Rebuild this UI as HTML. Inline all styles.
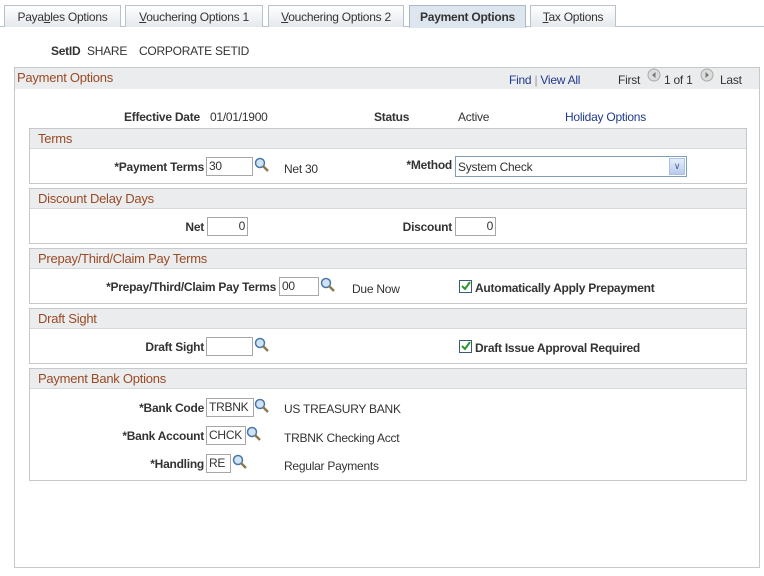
<!DOCTYPE html>
<html><head><meta charset="utf-8"><style>
*{margin:0;padding:0;box-sizing:border-box}
body{width:764px;height:576px;background:#fff;font-family:"Liberation Sans",Arial,sans-serif;font-size:12px;color:#333;position:relative;overflow:hidden;letter-spacing:-0.25px}
.a{position:absolute;white-space:nowrap}
.tab{position:absolute;top:5px;height:22px;border:1px solid #b7c2cc;border-bottom:none;background:linear-gradient(#fff,#e4e8ec);padding:4px 0 0;text-align:center;color:#333;font-size:12px}
.tab.on{background:#dde6ef;font-weight:bold;color:#333;height:22px;border-color:#a9b7c6}
.box{position:absolute;border:1px solid #c6c9cc}
.hd{position:absolute;left:0;right:0;top:0;height:20px;background:#eaecee;border-bottom:1px solid #d5d8db;color:#9a4a24;font-size:13px;padding:2px 0 0 8px}
.b{font-weight:bold}
.in{position:absolute;height:19px;border:1px solid #a7a7a7;background:#fff;padding:1px 2px;font-size:12px}
.lk{position:absolute;width:16px;height:16px}
.cb{position:absolute;width:13px;height:13px;border:1px solid #3a5a7a;background:#fff}
.blue{color:#223a8e}
</style></head><body>
<div class="a" style="left:0;top:26px;width:764px;border-top:1px solid #b7c2cc"></div>
<div class="tab" style="left:4px;width:117px">Paya<u>b</u>les Options</div>
<div class="tab" style="left:125px;width:138px"><u>V</u>ouchering Options 1</div>
<div class="tab" style="left:268px;width:136px"><u>V</u>ouchering Options 2</div>
<div class="tab on" style="left:409px;width:117px;height:23px;border-bottom:1px solid #dde6ef">Payment Options</div>
<div class="tab" style="left:530px;width:86px"><u>T</u>ax Options</div>

<div class="a b" style="left:51px;top:44px">SetID</div>
<div class="a" style="left:87px;top:44px">SHARE</div>
<div class="a" style="left:139px;top:44px">CORPORATE SETID</div>

<div class="box" style="left:14px;top:67px;width:746px;height:501px">
 <div class="hd" style="height:21px;border-bottom:none;padding-left:2px;font-size:13px">Payment Options</div>
</div>
<div class="a blue" style="left:509px;top:73px">Find <span style="color:#999">|</span> View All</div>
<div class="a" style="left:618px;top:73px">First</div>
<svg class="a" style="left:647px;top:68px" width="14" height="14"><circle cx="7" cy="7" r="6" fill="#ddd" stroke="#aaa"/><path d="M8.5 4v6L5 7z" fill="#777"/></svg>
<div class="a" style="left:664px;top:73px">1 of 1</div>
<svg class="a" style="left:700px;top:68px" width="14" height="14"><circle cx="7" cy="7" r="6" fill="#ddd" stroke="#aaa"/><path d="M5.5 4v6L9 7z" fill="#777"/></svg>
<div class="a" style="left:720px;top:73px">Last</div>

<div class="a b" style="left:124px;top:110px">Effective Date</div>
<div class="a" style="left:210px;top:110px">01/01/1900</div>
<div class="a b" style="left:374px;top:110px">Status</div>
<div class="a" style="left:458px;top:110px">Active</div>
<div class="a blue" style="left:565px;top:110px">Holiday Options</div>

<div class="box" style="left:29px;top:128px;width:718px;height:56px"><div class="hd">Terms</div></div>
<div class="a b" style="right:560px;top:160px">*Payment Terms</div>
<div class="in" style="left:206px;top:157px;width:47px">30</div>
<svg class="lk" style="left:254px;top:157px" viewBox="0 0 16 16"><circle cx="6" cy="6" r="4.5" fill="#cfe3f5" stroke="#4a78a8" stroke-width="1.5"/><path d="M9 9l5 5" stroke="#8a7a50" stroke-width="2.5"/></svg>
<div class="a" style="left:284px;top:162px">Net 30</div>
<div class="a b" style="right:312px;top:158px">*Method</div>
<div class="in" style="left:455px;top:156px;width:232px;height:21px;border-color:#7f9db9;padding-top:3px">System Check</div>
<div class="a" style="left:669px;top:158px;width:16px;height:17px;background:linear-gradient(#e6eefc,#b7c9ef);border:1px solid #b0c0e0;color:#4d6185;font-size:9px;text-align:center;line-height:15px">&#8744;</div>

<div class="box" style="left:29px;top:188px;width:718px;height:56px"><div class="hd">Discount Delay Days</div></div>
<div class="a b" style="right:560px;top:220px">Net</div>
<div class="in" style="left:207px;top:217px;width:41px;text-align:right">0</div>
<div class="a b" style="right:312px;top:220px">Discount</div>
<div class="in" style="left:455px;top:217px;width:41px;text-align:right">0</div>

<div class="box" style="left:29px;top:248px;width:718px;height:56px"><div class="hd">Prepay/Third/Claim Pay Terms</div></div>
<div class="a b" style="right:488px;top:280px">*Prepay/Third/Claim Pay Terms</div>
<div class="in" style="left:279px;top:277px;width:40px">00</div>
<svg class="lk" style="left:320px;top:277px" viewBox="0 0 16 16"><circle cx="6" cy="6" r="4.5" fill="#cfe3f5" stroke="#4a78a8" stroke-width="1.5"/><path d="M9 9l5 5" stroke="#8a7a50" stroke-width="2.5"/></svg>
<div class="a" style="left:352px;top:282px">Due Now</div>
<div class="cb" style="left:459px;top:280px"><svg width="11" height="11" style="display:block"><path d="M2 5l3 3 5-7" stroke="#2a9a2a" stroke-width="2" fill="none"/></svg></div>
<div class="a b" style="left:475px;top:281px">Automatically Apply Prepayment</div>

<div class="box" style="left:29px;top:308px;width:718px;height:56px"><div class="hd">Draft Sight</div></div>
<div class="a b" style="right:560px;top:340px">Draft Sight</div>
<div class="in" style="left:206px;top:337px;width:47px"></div>
<svg class="lk" style="left:254px;top:337px" viewBox="0 0 16 16"><circle cx="6" cy="6" r="4.5" fill="#cfe3f5" stroke="#4a78a8" stroke-width="1.5"/><path d="M9 9l5 5" stroke="#8a7a50" stroke-width="2.5"/></svg>
<div class="cb" style="left:459px;top:340px"><svg width="11" height="11" style="display:block"><path d="M2 5l3 3 5-7" stroke="#2a9a2a" stroke-width="2" fill="none"/></svg></div>
<div class="a b" style="left:475px;top:341px">Draft Issue Approval Required</div>

<div class="box" style="left:29px;top:368px;width:718px;height:113px"><div class="hd">Payment Bank Options</div></div>
<div class="a b" style="right:560px;top:401px">*Bank Code</div>
<div class="in" style="left:206px;top:398px;width:48px">TRBNK</div>
<svg class="lk" style="left:254px;top:398px" viewBox="0 0 16 16"><circle cx="6" cy="6" r="4.5" fill="#cfe3f5" stroke="#4a78a8" stroke-width="1.5"/><path d="M9 9l5 5" stroke="#8a7a50" stroke-width="2.5"/></svg>
<div class="a" style="left:284px;top:402px">US TREASURY BANK</div>
<div class="a b" style="right:560px;top:429px">*Bank Account</div>
<div class="in" style="left:206px;top:426px;width:40px">CHCK</div>
<svg class="lk" style="left:246px;top:426px" viewBox="0 0 16 16"><circle cx="6" cy="6" r="4.5" fill="#cfe3f5" stroke="#4a78a8" stroke-width="1.5"/><path d="M9 9l5 5" stroke="#8a7a50" stroke-width="2.5"/></svg>
<div class="a" style="left:284px;top:431px">TRBNK Checking Acct</div>
<div class="a b" style="right:560px;top:457px">*Handling</div>
<div class="in" style="left:206px;top:454px;width:25px">RE</div>
<svg class="lk" style="left:232px;top:454px" viewBox="0 0 16 16"><circle cx="6" cy="6" r="4.5" fill="#cfe3f5" stroke="#4a78a8" stroke-width="1.5"/><path d="M9 9l5 5" stroke="#8a7a50" stroke-width="2.5"/></svg>
<div class="a" style="left:284px;top:459px">Regular Payments</div>
</body></html>
